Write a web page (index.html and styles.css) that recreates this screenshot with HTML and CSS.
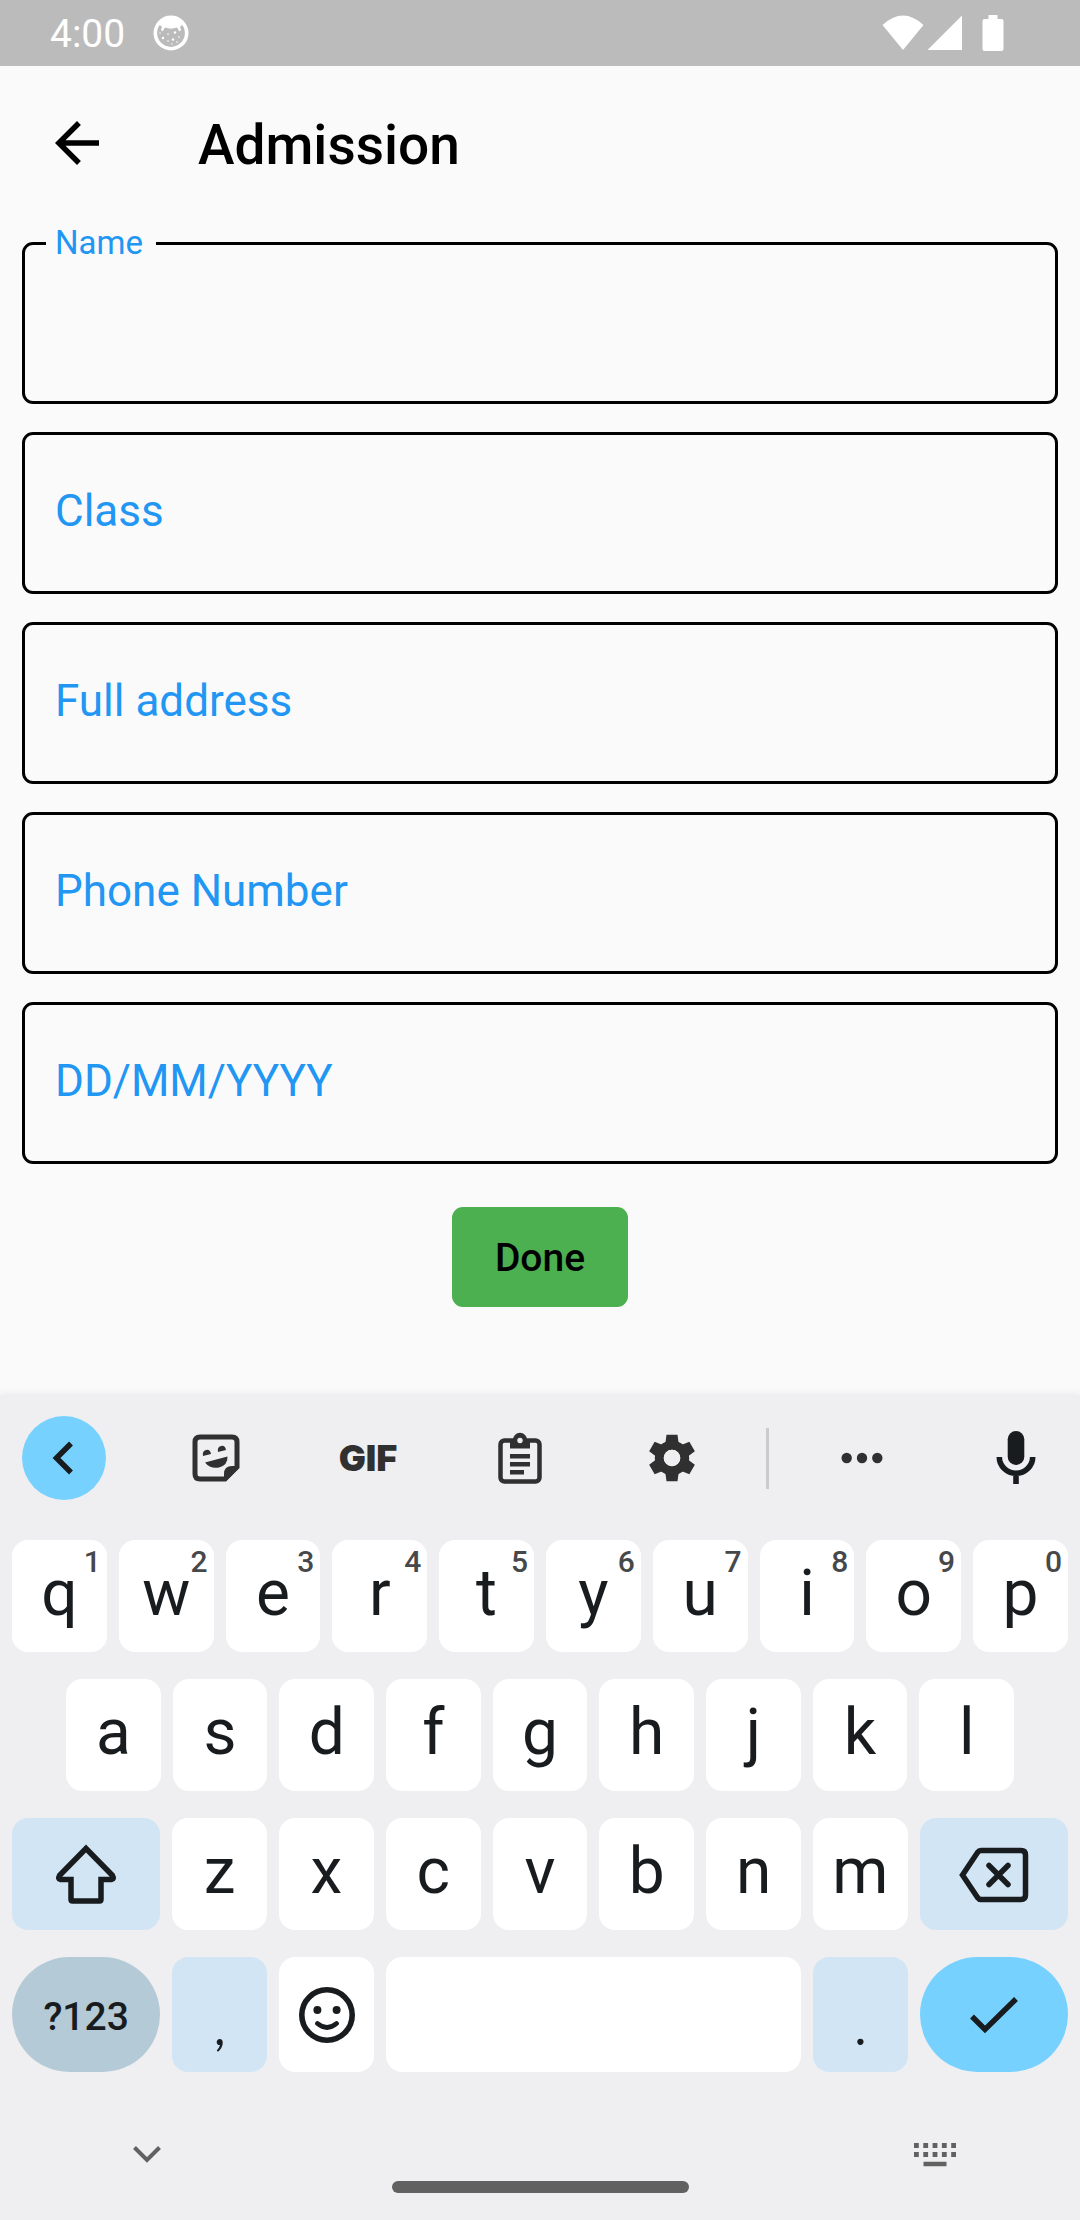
FILE: index.html
```html
<!DOCTYPE html>
<html lang="en">
<head>
<meta charset="utf-8">
<meta name="viewport" content="width=device-width, initial-scale=1">
<title>Admission</title>
<link rel="stylesheet" href="styles.css">
</head>
<body>
<div class="screen">
  <div class="status-bar">
    <span class="time">4:00</span>
    <svg class="notice" width="36" height="36" viewBox="0 0 36 36" aria-hidden="true">
      <circle cx="18" cy="18" r="15.7" fill="none" stroke="#fff" stroke-width="3.6"/>
      <path d="M6 9C11 0 25 0 30 9l-3 3 1 3-1.500 1.500-2.500-4c-4 1.500-8 1.500-12 0l-2.500 4L8 15l1-3z" fill="#fff"/>
      <g fill="#fff"><circle cx="10" cy="23" r="1.200"/><circle cx="15" cy="19" r=".8"/><circle cx="22" cy="17.500" r="1.200"/><circle cx="20" cy="24.500" r="1.200"/><circle cx="26" cy="22" r=".8"/><circle cx="15" cy="26" r=".8"/><circle cx="7" cy="18" r=".7"/><circle cx="24" cy="27" r=".8"/><circle cx="19" cy="29" r=".7"/></g>
    </svg>
    <div class="status-icons">
      <svg width="42" height="36" viewBox="0 0 42 36" aria-hidden="true"><path d="M0.500 10Q21-9 41.500 10L21 35z" fill="#fff"/></svg>
      <svg width="36" height="36" viewBox="0 0 36 36" aria-hidden="true"><path d="M0.500 35L35 .5V35z" fill="#fff"/></svg>
      <svg class="battery" width="22" height="36" viewBox="0 0 22 36" aria-hidden="true"><path d="M6.500 0h9v4H19.500q2 0 2 2v28q0 2-2 2h-17q-2 0-2-2V6q0-2 2-2h4z" fill="#fff"/></svg>
    </div>
  </div>

  <header class="app-bar">
    <button class="back" type="button" aria-label="Back">
      <svg width="66" height="66" viewBox="0 0 24 24" aria-hidden="true"><path d="M20 11H7.830l5.590-5.590L12 4l-8 8 8 8 1.410-1.410L7.830 13H20z"/></svg>
    </button>
    <h1>Admission</h1>
  </header>

  <main>
    <form class="form">
      <div class="field focused"><input id="name" type="text"><label for="name">Name</label></div>
      <div class="field"><input id="class" type="text"><label for="class">Class</label></div>
      <div class="field"><input id="address" type="text"><label for="address">Full address</label></div>
      <div class="field"><input id="phone" type="tel"><label for="phone">Phone Number</label></div>
      <div class="field"><input id="date" type="text"><label for="date">DD/MM/YYYY</label></div>
      <button class="done" type="button">Done</button>
    </form>
  </main>

  <section class="keyboard" aria-label="Keyboard">
    <div class="toolbar">
      <button class="tool collapse" type="button" aria-label="Close toolbar">
        <svg width="84" height="84" viewBox="0 0 84 84" fill="none" stroke="#191c1e" stroke-width="5.500" aria-hidden="true"><path d="M49 27.500L34.500 42 49 56.500"/></svg>
      </button>
      <button class="tool" type="button" aria-label="Stickers">
        <svg width="48" height="48" viewBox="0 0 48 48" fill="#303030" aria-hidden="true">
          <path d="M33 45H8q-5 0-5-5V8q0-5 5-5h32q5 0 5 5v25z" fill="none" stroke="#303030" stroke-width="5"/>
          <path d="M32 47V40q0-8 8-8h7v2L34 47z"/>
          <path d="M11 22q-1-5 3-6 4-1 5 4zM26 18q-1-5 3-6 4-1 5 4z"/>
          <path d="M13 28.500L35.500 22.500Q36 31 27 33.500 18 35 13 28.500z"/>
        </svg>
      </button>
      <button class="tool gif" type="button">GIF</button>
      <button class="tool" type="button" aria-label="Clipboard">
        <svg width="44" height="52" viewBox="0 0 44 52" fill="#303030" aria-hidden="true">
          <rect x="2.500" y="8.500" width="39" height="41" rx="4" fill="none" stroke="#303030" stroke-width="4.500"/>
          <path d="M12 8h20v8.500H12z"/><circle cx="22" cy="8" r="7.200"/>
          <circle cx="22" cy="8.500" r="2.700" fill="#efeff1"/>
          <path d="M12 22h20v4.500H12zM12 30h20v4.500H12zM12 38h14v4.500H12z"/>
        </svg>
      </button>
      <button class="tool" type="button" aria-label="Settings">
        <svg width="46" height="48" viewBox="0 0 46 48" fill="#303030" aria-hidden="true">
          <path d="M17.500 .8h11L30 12H16zM17.500 47.200h11L30 36H16z"/>
          <path d="M17.500 .8h11L30 12H16zM17.500 47.200h11L30 36H16z" transform="rotate(60 23 24)"/>
          <path d="M17.500 .8h11L30 12H16zM17.500 47.200h11L30 36H16z" transform="rotate(120 23 24)"/>
          <circle cx="23" cy="24" r="12.700" fill="none" stroke="#303030" stroke-width="9"/>
          <circle cx="23" cy="24" r="8.300" fill="#efeff1"/>
        </svg>
      </button>
      <span class="divider"></span>
      <button class="tool" type="button" aria-label="More">
        <svg width="42" height="12" viewBox="0 0 42 12" fill="#303030" aria-hidden="true"><circle cx="5.700" cy="6" r="5.200"/><circle cx="21" cy="6" r="5.200"/><circle cx="36.300" cy="6" r="5.200"/></svg>
      </button>
      <button class="tool mic" type="button" aria-label="Voice typing">
        <svg width="40" height="54" viewBox="0 0 40 54" aria-hidden="true">
          <rect x="11.700" y="0" width="16.600" height="34" rx="8.300" fill="#191c1e"/>
          <path d="M3.300 26a16.700 16.200 0 0 0 33.400 0M20 42v11" fill="none" stroke="#191c1e" stroke-width="5.600"/>
        </svg>
      </button>
    </div>

    <div class="keys">
      <div class="row">
        <button class="key" type="button">q<span class="hint">1</span></button>
        <button class="key" type="button">w<span class="hint">2</span></button>
        <button class="key" type="button">e<span class="hint">3</span></button>
        <button class="key" type="button">r<span class="hint">4</span></button>
        <button class="key" type="button">t<span class="hint">5</span></button>
        <button class="key" type="button">y<span class="hint">6</span></button>
        <button class="key" type="button">u<span class="hint">7</span></button>
        <button class="key" type="button">i<span class="hint">8</span></button>
        <button class="key" type="button">o<span class="hint">9</span></button>
        <button class="key" type="button">p<span class="hint">0</span></button>
      </div>
      <div class="row inset">
        <button class="key" type="button">a</button>
        <button class="key" type="button">s</button>
        <button class="key" type="button">d</button>
        <button class="key" type="button">f</button>
        <button class="key" type="button">g</button>
        <button class="key" type="button">h</button>
        <button class="key" type="button">j</button>
        <button class="key" type="button">k</button>
        <button class="key" type="button">l</button>
      </div>
      <div class="row">
        <button class="key icon wide tinted" type="button" aria-label="Shift">
          <svg width="62" height="62" viewBox="0 0 62 62" fill="none" stroke="#191c1e" stroke-width="5.500" aria-hidden="true"><path d="M31 5.500L57.500 32.500Q59.500 36 56.500 36.500H46V56.500Q46 58 44.500 58H17.500Q16 58 16 56.500V36.500H5.500Q2.500 36 4.500 32.500z"/></svg>
        </button>
        <button class="key" type="button">z</button>
        <button class="key" type="button">x</button>
        <button class="key" type="button">c</button>
        <button class="key" type="button">v</button>
        <button class="key" type="button">b</button>
        <button class="key" type="button">n</button>
        <button class="key" type="button">m</button>
        <button class="key icon wide tinted" type="button" aria-label="Backspace">
          <svg width="70" height="60" viewBox="0 0 70 60" fill="none" stroke="#191c1e" stroke-width="5.500" aria-hidden="true"><path d="M3.500 31L18.500 8.500Q20 6.500 22 6.500H62Q66.500 6.500 66.500 11V51Q66.500 55.500 62 55.500H22Q20 55.500 18.500 53.500z"/><path d="M30 21.500l19 19M49 21.500l-19 19" stroke-linecap="round"/></svg>
        </button>
      </div>
      <div class="row last">
        <button class="key wide symbols" type="button">?123</button>
        <button class="key tinted mark" type="button">,</button>
        <button class="key icon" type="button" aria-label="Emoji">
          <svg width="56" height="56" viewBox="0 0 56 56" aria-hidden="true"><circle cx="28" cy="28" r="25.200" fill="none" stroke="#191c1e" stroke-width="5.600"/><circle cx="18.400" cy="23" r="4" fill="#191c1e"/><circle cx="37.600" cy="23" r="4" fill="#191c1e"/><path d="M18.500 36.500Q28 44.500 37.500 36.500" fill="none" stroke="#191c1e" stroke-width="4.800" stroke-linecap="round"/></svg>
        </button>
        <button class="key space" type="button" aria-label="Space"></button>
        <button class="key tinted mark" type="button">.</button>
        <button class="key icon wide enter" type="button" aria-label="Done">
          <svg width="50" height="38" viewBox="0 0 50 38" fill="none" stroke="#191c1e" stroke-width="5.500" aria-hidden="true"><path d="M3 20.500L16 33.500 47 3"/></svg>
        </button>
      </div>
    </div>

    <div class="nav">
      <button class="nav-button" type="button" aria-label="Hide keyboard">
        <svg width="46" height="46" viewBox="0 0 46 46" fill="none" stroke="#616161" stroke-width="4" aria-hidden="true"><path d="M10.500 16.500L23 29l12.500-12.500"/></svg>
      </button>
      <button class="nav-button" type="button" aria-label="Switch keyboard">
        <svg width="46" height="46" viewBox="0 0 46 46" fill="none" stroke="#616161" aria-hidden="true"><path d="M2 14.500h42M2 23.500h42" stroke-width="5" stroke-dasharray="4.800 4.500"/><path d="M11.500 33h23" stroke-width="4.500"/></svg>
      </button>
    </div>
    <div class="home"></div>
  </section>
</div>
</body>
</html>
```
FILE: styles.css
```css
* { box-sizing: border-box; }

body {
  margin: 0;
  background: #fafafa;
  color: #000;
  font-family: Roboto, sans-serif;
}

button {
  margin: 0;
  padding: 0;
  border: 0;
  background: none;
  color: inherit;
  font: inherit;
}

svg { display: block; }

.screen {
  display: flex;
  flex-direction: column;
  min-height: 100vh;
}

/* Status bar */
.status-bar {
  display: flex;
  align-items: center;
  height: 66px;
  padding: 0 76px 0 50px;
  background: #bbb;
  color: #fff;
}
.time {
  padding-top: 2px;
  font-size: 39px;
  line-height: 46px;
}
.notice { margin-left: 28px; }
.status-icons {
  display: flex;
  gap: 3px;
  margin-left: auto;
}
.battery { margin-left: 16px; }

/* App bar */
.app-bar {
  display: flex;
  align-items: center;
  gap: 88px;
  height: 154px;
  padding: 0 44px;
}
.app-bar h1 {
  margin: 0;
  padding-top: 3px;
  font-size: 55px;
  font-weight: 500;
  line-height: 64px;
}

/* Form */
main { flex: 1; }
.form {
  display: flex;
  flex-direction: column;
  gap: 28px;
  padding: 22px;
}
.field { position: relative; }
.field input {
  display: block;
  width: 100%;
  height: 162px;
  padding: 0 30px;
  border: 3px solid #000;
  border-radius: 11px;
  outline: 0;
  background: transparent;
  font: 44px/52px Roboto, sans-serif;
}
.field label {
  position: absolute;
  top: 53px;
  left: 33px;
  color: #2196f3;
  font-size: 44px;
  line-height: 52px;
}
.field.focused label {
  top: -18px;
  left: 24px;
  padding: 0 13px 0 9px;
  background: #fafafa;
  font-size: 33px;
  line-height: 38px;
}
.done {
  align-self: center;
  margin-top: 15px;
  padding: 28px 43px 26px;
  border-radius: 11px;
  background: #4caf50;
  font-size: 39px;
  font-weight: 500;
  line-height: 46px;
}

/* Keyboard */
.keyboard {
  background: #efeff1;
  box-shadow: 0 0 8px #e4e4e6;
  color: #191c1e;
}
.toolbar {
  display: grid;
  grid-template-columns: 140fr 152fr 152fr 152fr 152fr 39fr 149fr 144fr;
  align-items: center;
  justify-items: center;
  height: 126px;
}
.collapse {
  justify-self: start;
  margin-left: 22px;
  border-radius: 50%;
  background: #77d1ff;
}
.gif {
  color: #303030;
  font: 900 36px/44px Inter, sans-serif;
}
.divider {
  width: 3px;
  height: 61px;
  background: #cbcbcd;
}
.mic { padding-left: 16px; }

.keys {
  display: flex;
  flex-direction: column;
  gap: 27px;
  padding: 19px 12px 0;
}
.row {
  display: flex;
  gap: 12px;
}
.inset { padding: 0 54px; }
.key {
  position: relative;
  display: flex;
  flex: 16 1 0;
  align-items: center;
  justify-content: center;
  height: 112px;
  padding-bottom: 4px;
  border-radius: 16px;
  background: #fff;
  font: 64px/76px Roboto, sans-serif;
}
.last .key { height: 115px; }
.hint {
  position: absolute;
  top: 4px;
  right: 6px;
  color: #46484a;
  font: 500 30px/36px Roboto, sans-serif;
}
.key.icon { padding-bottom: 0; }
.key.wide { flex-grow: 25; }
.key.space { flex-grow: 70; }
.key.tinted { background: #d2e5f4; }
.key.symbols {
  padding: 4px 0 0;
  border-radius: 58px;
  background: #b4cad7;
  font: 500 39px/46px Roboto, sans-serif;
}
.key.mark {
  padding: 22px 0 0;
  font: 50px/60px Lato, sans-serif;
}
.key.enter {
  border-radius: 58px;
  background: #77d1ff;
}

.nav {
  display: flex;
  justify-content: space-between;
  padding: 59px 122px 0 124px;
}
.home {
  width: 297px;
  height: 12px;
  margin: 4px auto 0;
  border-radius: 6px;
  background: #616161;
}
.keyboard::after {
  display: block;
  height: 27px;
  content: "";
}
```
